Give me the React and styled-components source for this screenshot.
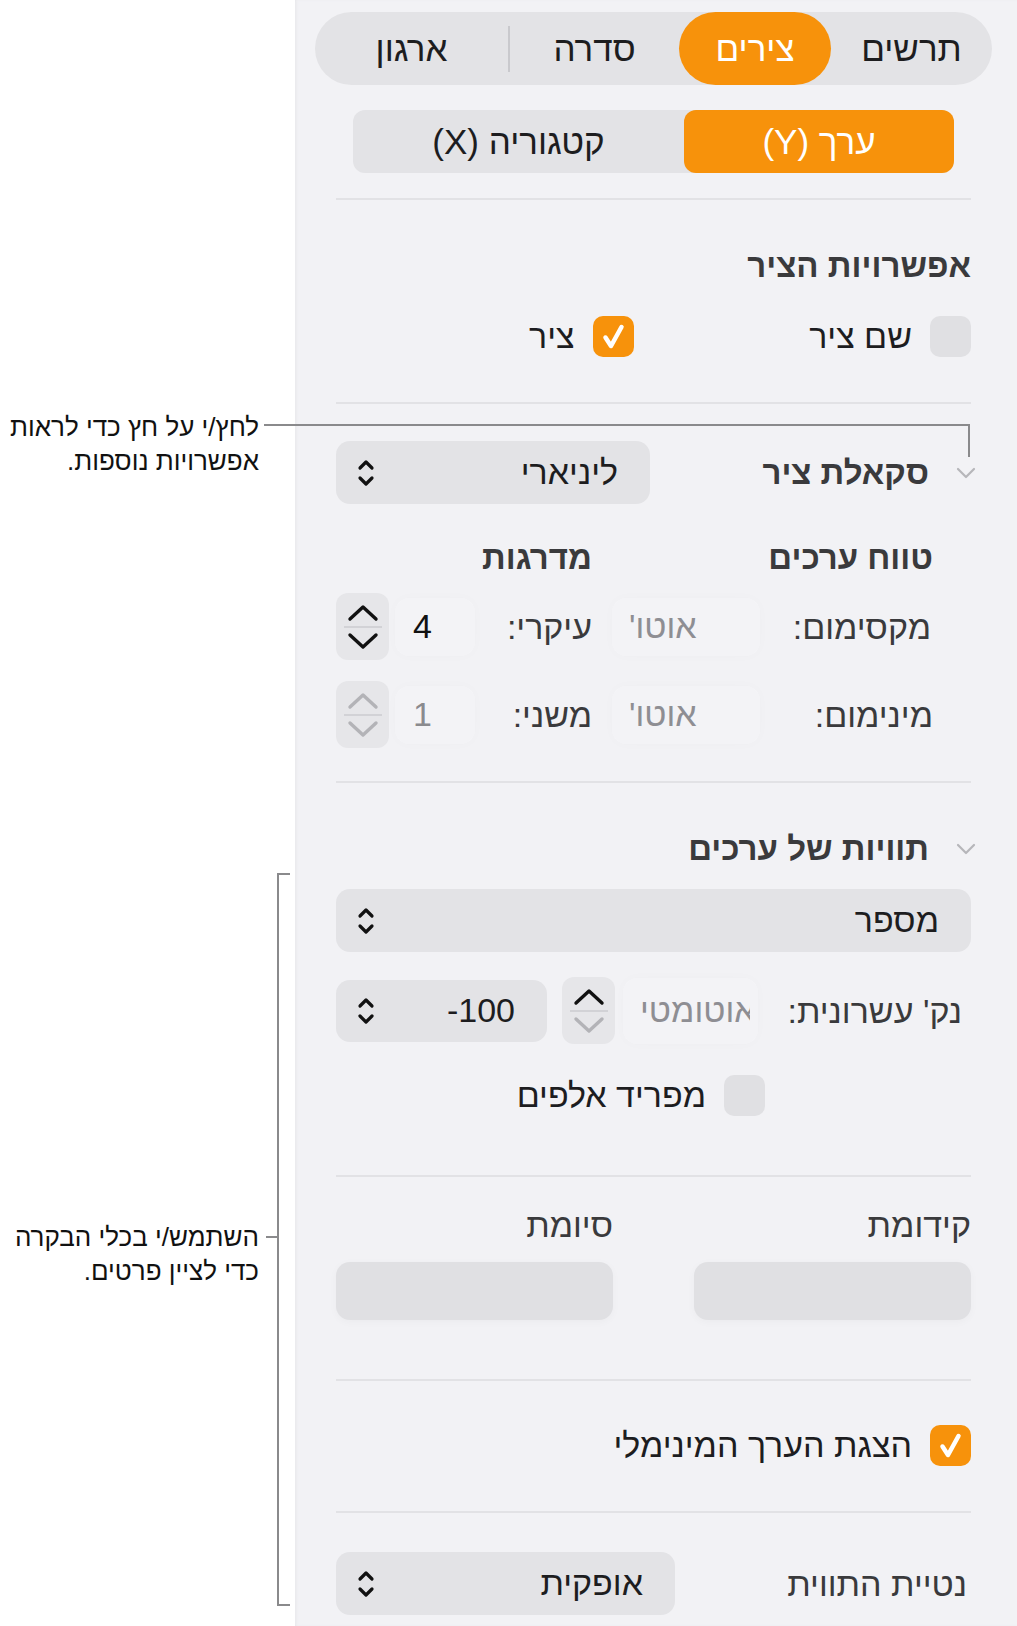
import styled, { createGlobalStyle } from "styled-components";

const GlobalStyle = createGlobalStyle`
  html, body {
    margin: 0;
    padding: 0;
    background: #ffffff;
  }
  body {
    font-family: "Liberation Sans", "DejaVu Sans", Arial, sans-serif;
  }
`;

const ORANGE = "#f7920b";
const CONTROL = "#e3e3e6";
const INK = "#1d1d1f";
const MUTED = "#3a3a3c";

const Page = styled.div`
  position: relative;
  display: flex;
  width: 1017px;
  height: 1626px;
  overflow: hidden;
  background: #fff;
`;

/* ---------- left annotations ---------- */

const Notes = styled.div`
  width: 295px;
  flex: none;
  box-sizing: border-box;
  padding-right: 36px;
  display: flex;
  flex-direction: column;
  direction: rtl;
`;

const Note = styled.div`
  margin-top: ${(p) => p.$gap}px;
  font-size: 26px;
  line-height: 34px;
  color: #111;
  text-align: right;
  white-space: nowrap;
`;

const Leader = styled.div`
  position: absolute;
  background: #8a8a8c;
  left: ${(p) => p.$x}px;
  top: ${(p) => p.$y}px;
  width: ${(p) => p.$w}px;
  height: ${(p) => p.$h}px;
`;

const Bracket = styled.div`
  position: absolute;
  left: 277px;
  top: 873px;
  width: 11px;
  height: 729px;
  border: 2px solid #8a8a8c;
  border-right: none;
`;

/* ---------- inspector panel ---------- */

const Panel = styled.div`
  flex: 1;
  direction: rtl;
  box-sizing: border-box;
  padding: 12px 46px 0 41px;
  background: #f2f2f5;
  box-shadow: inset 2px 0 3px -1px #e6e6e9;
`;

const Tabs = styled.div`
  display: flex;
  align-items: center;
  height: 73px;
  margin: 0 -21px;
  border-radius: 37px;
  background: ${CONTROL};
`;

const Tab = styled.div`
  width: ${(p) => p.$w}px;
  height: 100%;
  display: flex;
  align-items: center;
  justify-content: center;
  border-radius: 37px;
  font-size: 35px;
  color: ${(p) => (p.$on ? "#fff" : INK)};
  background: ${(p) => (p.$on ? ORANGE : "transparent")};
`;

const TabSep = styled.div`
  width: 2px;
  height: 46px;
  background: #c9c9cd;
`;

const AxisSwitch = styled.div`
  display: grid;
  grid-template-columns: 270px 1fr;
  height: 63px;
  margin: 25px 17px 0;
  border-radius: 12px;
  background: ${CONTROL};
`;

const AxisOption = styled.div`
  display: flex;
  align-items: center;
  justify-content: center;
  border-radius: 12px;
  font-size: 35px;
  color: ${(p) => (p.$on ? "#fff" : INK)};
  background: ${(p) => (p.$on ? ORANGE : "transparent")};
`;

const Rule = styled.div`
  height: 2px;
  margin-top: ${(p) => p.$gap}px;
  background: #e2e2e5;
`;

const Heading = styled.div`
  margin-top: ${(p) => p.$gap || 0}px;
  padding-right: ${(p) => p.$inset || 0}px;
  font-size: 33px;
  line-height: 40px;
  font-weight: 700;
  color: ${MUTED};
  white-space: nowrap;
`;

const Label = styled.div`
  padding-right: ${(p) => p.$inset || 0}px;
  font-size: 34px;
  line-height: 40px;
  color: ${(p) => p.$color || MUTED};
  white-space: nowrap;
`;

const CheckRow = styled.div`
  display: grid;
  grid-template-columns: ${(p) => p.$cols || "1fr"};
  column-gap: 40px;
  margin-top: ${(p) => p.$gap}px;
  padding-right: ${(p) => p.$inset || 0}px;
`;

const CheckItem = styled.div`
  display: flex;
  align-items: center;
  gap: 18px;
  height: 42px;
`;

const Box = styled.div`
  width: 41px;
  height: 41px;
  flex: none;
  border-radius: 10px;
  display: flex;
  align-items: center;
  justify-content: center;
  background: ${(p) => (p.$on ? ORANGE : "#e0e0e3")};
`;

const Row = styled.div`
  display: flex;
  align-items: center;
  justify-content: space-between;
  height: ${(p) => p.$h}px;
  margin-top: ${(p) => p.$gap}px;
`;

const HeadGroup = styled.div`
  display: flex;
  align-items: center;
  gap: 27px;
  margin-right: -5px;
`;

const Popup = styled.div`
  width: ${(p) => (p.$w ? `${p.$w}px` : "100%")};
  height: ${(p) => p.$h || 63}px;
  justify-self: end;
  box-sizing: border-box;
  flex: none;
  display: flex;
  align-items: center;
  justify-content: space-between;
  padding: 0 32px 0 21px;
  border-radius: 14px;
  background: ${CONTROL};
  font-size: 34px;
  color: ${INK};
`;

const Ltr = styled.span`
  direction: ltr;
  unicode-bidi: isolate;
`;

const RangeGrid = styled.div`
  display: grid;
  grid-template-columns: 211px 148px 137px 80px 59px;
  grid-auto-rows: ${(p) => p.$rowH}px;
  row-gap: 21px;
  align-items: center;
  margin-top: ${(p) => p.$gap}px;
`;

const Field = styled.div`
  height: ${(p) => p.$h || 58}px;
  box-sizing: border-box;
  display: flex;
  align-items: center;
  direction: ltr;
  padding-left: ${(p) => p.$pad || 16}px;
  padding-right: 8px;
  border-radius: 14px;
  background: rgba(255, 255, 255, 0.14);
  box-shadow: 0 0 12px rgba(0, 0, 0, 0.02);
  font-size: 34px;
  color: ${(p) => p.$color || "#8e8e93"};
`;

const Clip = styled.span`
  flex: 1;
  overflow: hidden;
  white-space: nowrap;
`;

const FieldText = styled.span`
  direction: rtl;
  unicode-bidi: isolate;
`;

const Stepper = styled.div`
  width: 53px;
  height: 67px;
  justify-self: end;
  flex: none;
  box-sizing: border-box;
  display: flex;
  flex-direction: column;
  align-items: center;
  justify-content: center;
  gap: 4px;
  border-radius: 12px;
  background: #e6e6e9;
  color: ${(p) => (p.$off ? "#b3b3b7" : "#111")};
`;

const StepRule = styled.div`
  width: 38px;
  height: 2px;
  background: #d2d2d6;
`;

const StepDown = styled.span`
  display: flex;
  color: ${(p) => (p.$off ? "#b3b3b7" : "inherit")};
`;

const DecimalRow = styled.div`
  display: grid;
  grid-template-columns: 213px 135px 61px 226px;
  align-items: center;
  height: 67px;
  margin-top: 25px;
`;

const AffixGrid = styled.div`
  display: grid;
  grid-template-columns: 277px 277px;
  justify-content: space-between;
  row-gap: 17px;
  margin-top: 28px;
`;

const AffixBox = styled.div`
  height: 58px;
  border-radius: 14px;
  background: #e0e0e3;
  box-shadow: 0 2px 8px rgba(0, 0, 0, 0.03);
`;

/* ---------- icons ---------- */

const UpDown = () => (
  <svg width="18" height="30" viewBox="0 0 18 30" fill="none" stroke="#111" strokeWidth="3.2" strokeLinecap="round" strokeLinejoin="round">
    <path d="M3 10 L9 4 L15 10" />
    <path d="M3 20 L9 26 L15 20" />
  </svg>
);

const Chevron = ({ up }) => (
  <svg width="32" height="18" viewBox="0 0 32 18" fill="none" stroke="currentColor" strokeWidth="3.4" strokeLinecap="round" strokeLinejoin="round">
    <path d={up ? "M3 15 L16 3 L29 15" : "M3 3 L16 15 L29 3"} />
  </svg>
);

const Disclosure = () => (
  <svg width="20" height="12" viewBox="0 0 20 12" fill="none" stroke="#b6b6ba" strokeWidth="2.2" strokeLinecap="round" strokeLinejoin="round">
    <path d="M2 2 L10 10 L18 2" />
  </svg>
);

const Tick = () => (
  <svg width="41" height="41" viewBox="0 0 41 41" fill="none" stroke="#fff" strokeWidth="4.5" strokeLinecap="round" strokeLinejoin="round">
    <path d="M12.5 21.5 L18 30 L28.5 11" />
  </svg>
);

const Check = ({ on, label }) => (
  <CheckItem>
    <Box $on={on}>{on && <Tick />}</Box>
    <Label $color={INK}>{label}</Label>
  </CheckItem>
);

const Step = ({ off, downOff }) => (
  <Stepper $off={off}>
    <Chevron up />
    <StepRule />
    <StepDown $off={downOff}>
      <Chevron />
    </StepDown>
  </Stepper>
);

export default function App() {
  return (
    <Page>
      <GlobalStyle />
      <Notes>
        <Note $gap={410}>
          לחץ/י על חץ כדי לראות
          <br />
          אפשרויות נוספות.
        </Note>
        <Note $gap={742}>
          השתמש/י בכלי הבקרה
          <br />
          כדי לציין פרטים.
        </Note>
      </Notes>

      <Panel>
        <Tabs>
          <Tab $w={161}>תרשים</Tab>
          <Tab $w={152} $on>צירים</Tab>
          <Tab $w={169}>סדרה</Tab>
          <TabSep />
          <Tab $w={193}>ארגון</Tab>
        </Tabs>

        <AxisSwitch>
          <AxisOption $on>ערך (Y)</AxisOption>
          <AxisOption>קטגוריה (X)</AxisOption>
        </AxisSwitch>

        <Rule $gap={25} />

        <Heading $gap={46}>אפשרויות הציר</Heading>
        <CheckRow $gap={29} $cols="1fr 1fr">
          <Check label="שם ציר" />
          <Check on label="ציר" />
        </CheckRow>

        <Rule $gap={45} />

        <Row $h={63} $gap={37}>
          <HeadGroup>
            <Disclosure />
            <Heading>סקאלת ציר</Heading>
          </HeadGroup>
          <Popup $w={314}>
            <span>ליניארי</span>
            <UpDown />
          </Popup>
        </Row>

        <RangeGrid $gap={34} $rowH={40}>
          <Heading $inset={38}>טווח ערכים</Heading>
          <span />
          <Heading $inset={20}>מדרגות</Heading>
        </RangeGrid>

        <RangeGrid $gap={15} $rowH={67}>
          <Label $inset={40}>מקסימום:</Label>
          <Field $pad={17}>
            <FieldText>אוטו'</FieldText>
          </Field>
          <Label $inset={20}>עיקרי:</Label>
          <Field $pad={18} $color="#111">4</Field>
          <Step />

          <Label $inset={38}>מינימום:</Label>
          <Field $pad={17}>
            <FieldText>אוטו'</FieldText>
          </Field>
          <Label $inset={20}>משני:</Label>
          <Field $pad={18} $color="#8a8a8e">1</Field>
          <Step off downOff />
        </RangeGrid>

        <Rule $gap={33} />

        <Row $h={40} $gap={46}>
          <HeadGroup>
            <Disclosure />
            <Heading>תוויות של ערכים</Heading>
          </HeadGroup>
        </Row>

        <Row $h={63} $gap={20}>
          <Popup>
            <span>מספר</span>
            <UpDown />
          </Popup>
        </Row>

        <DecimalRow>
          <Label $inset={9}>נק' עשרונית:</Label>
          <Field $pad={17} $h={66}>
            <Clip>
              <FieldText>אוטומטי</FieldText>
            </Clip>
          </Field>
          <Step downOff />
          <Popup $w={211} $h={62}>
            <Ltr>-100</Ltr>
            <UpDown />
          </Popup>
        </DecimalRow>

        <CheckRow $gap={30} $inset={206}>
          <Check label="מפריד אלפים" />
        </CheckRow>

        <Rule $gap={59} />

        <AffixGrid>
          <Label>קידומת</Label>
          <Label>סיומת</Label>
          <AffixBox />
          <AffixBox />
        </AffixGrid>

        <Rule $gap={59} />

        <CheckRow $gap={43}>
          <Check on label="הצגת הערך המינימלי" />
        </CheckRow>

        <Rule $gap={45} />

        <Row $h={63} $gap={39}>
          <Label $inset={4}>נטיית התווית</Label>
          <Popup $w={339}>
            <span>אופקית</span>
            <UpDown />
          </Popup>
        </Row>
      </Panel>

      <Leader $x={264} $y={424} $w={706} $h={2} />
      <Leader $x={968} $y={424} $w={2} $h={33} />
      <Bracket />
      <Leader $x={266} $y={1236} $w={12} $h={2} />
    </Page>
  );
}
